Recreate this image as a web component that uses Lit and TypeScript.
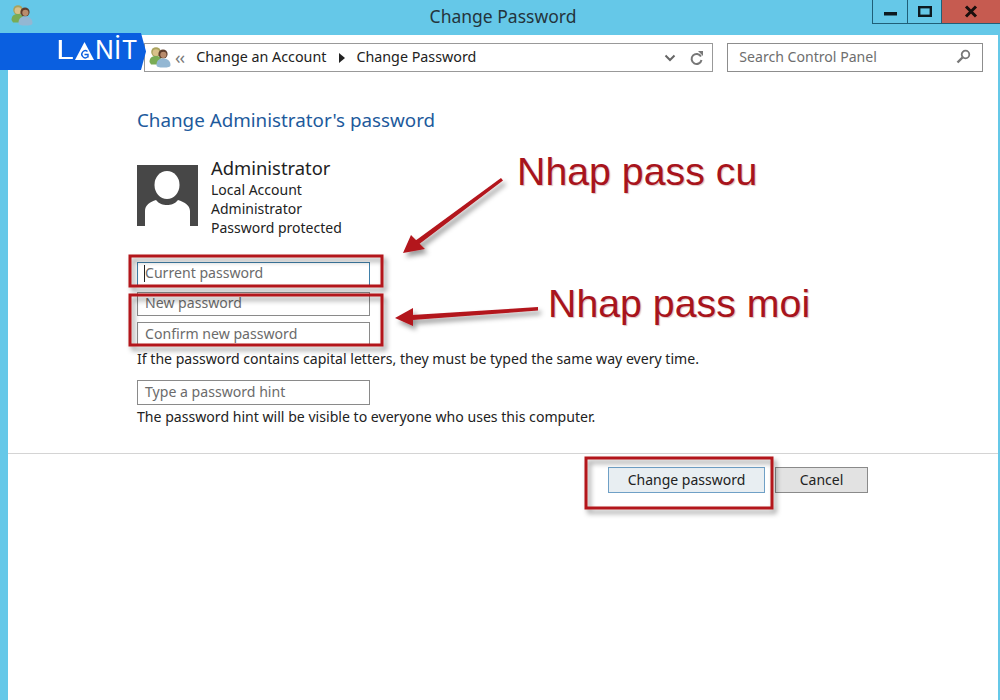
import { LitElement, html, css, svg } from "lit";
import { customElement } from "lit/decorators.js";

const users = (s: number) => html`<svg width=${s} height=${s} viewBox="0 0 22 22">
  <circle cx="7" cy="6" r="4.800" fill="#a9a25c"/>
  <circle cx="7" cy="6.600" r="3.400" fill="#d8c08a"/>
  <path d="M0.500 16c0-4.500 3-6 6.500-6s5.500 1.500 5.500 6l-1 2.500H2z" fill="#79ab55"/>
  <circle cx="14" cy="8" r="4.600" fill="#5e3d2b"/>
  <circle cx="14.400" cy="8.800" r="3.100" fill="#b98c6c"/>
  <path d="M7.500 19c0-5 3-6.500 6.500-6.500s7.500 1.500 7.500 6.500c0 2-2.500 2.500-7 2.500s-7-.5-7-2.500z" fill="#93b7d3"/>
</svg>`;

const arrowDefs = svg`<defs>
  <filter id="sh" x="-30%" y="-30%" width="170%" height="170%">
    <feDropShadow dx="3" dy="4" stdDeviation="2.500" flood-color="#000" flood-opacity=".4"/>
  </filter>
</defs>`;

@customElement("app-root")
export class AppRoot extends LitElement {
  static styles = css`
    :host { display: block; width: 1000px; height: 700px; position: relative; overflow: hidden;
      background: #65c8e8; font-family: "Noto Sans", "Open Sans", sans-serif; color: #1e1e1e; }
    .window { display: flex; flex-direction: column; height: 700px; }
    .titlebar { height: 35px; flex: none; display: flex; align-items: flex-start; position: relative; }
    .appicon { margin: 4px 0 0 11px; }
    .title { position: absolute; left: 0; right: 0; top: 5px; padding-left: 6px; text-align: center; font-size: 17.500px; line-height: 22px; color: #24343c; }
    .controls { position: relative; margin-left: auto; display: flex; height: 23px; border-left: 1px solid #1f5f78; border-bottom: 1px solid #1f5f78; }
    .ctl { display: flex; align-items: center; justify-content: center; }
    .ctl.min { width: 34px; border-right: 1px solid #1f5f78; }
    .ctl.max { width: 33px; border-right: 1px solid #1f5f78; }
    .ctl.close { width: 58px; background: #c65b50; }
    .pane { flex: 1; margin: 0 2px 0 8px; background: #fff; display: flex; flex-direction: column; }
    .nav { flex: none; display: flex; gap: 14px; padding: 8px 15px 0 136px; height: 29px; }
    .addr, .search { height: 29px; box-sizing: border-box; border: 1px solid #8d8d8d; display: flex; align-items: center; font-size: 14.300px; background: #fff; padding-bottom: 2px; }
    .addr { width: 570px; border-color: #999; padding-left: 4px; }
    .search { width: 256px; padding-left: 11px; padding-right: 11px; color: #6e6e6e; justify-content: space-between; font-size: 14.100px; }
    .chev { color: #777; margin: 0 12px 0 4px; font-size: 18px; line-height: 18px; letter-spacing: -1px; }
    .crumb { color: #222; }
    .sep { margin: 2px 11px 0 13px; width: 0; height: 0; border-left: 6px solid #222; border-top: 5px solid transparent; border-bottom: 5px solid transparent; }
    .addr .tools { margin-left: auto; display: flex; gap: 13px; align-items: center; padding-right: 8px; padding-top: 2px; }
    .content { flex: 1; display: flex; flex-direction: column; padding: 35px 0 0 129px; }
    h1 { margin: 0; font-weight: 400; font-size: 18.800px; line-height: 26px; color: #1d5a9c; }
    .user { display: flex; gap: 13px; margin-top: 24px; }
    .avatar { width: 61px; height: 61px; flex: none; display: block; margin-top: 8px; }
    .uname { font-size: 18.400px; line-height: 24px; color: #222; margin-top: -1px; }
    .uline { font-size: 14px; line-height: 19px; color: #222; }
    .field { width: 233px; height: 24px; box-sizing: border-box; border: 1px solid #8a8a8a; font-size: 14.100px; line-height: 20px; color: #6b6b6b; padding-left: 7px; }
    .fields { display: flex; flex-direction: column; gap: 6px; margin-top: 25px; }
    .field.focus { border-color: #3f7fa8; padding-left: 6px; padding-bottom: 2px; display: flex; align-items: center; }
    .field.confirm { line-height: 21px; }
    .caret { width: 1px; height: 17px; background: #222; }
    .note { font-size: 14.100px; line-height: 20px; color: #222; }
    .note.a { margin-top: 3px; }
    .field.hint { margin-top: 11px; height: 25px; line-height: 22px; }
    .note.b { margin-top: 2px; }
    .divider { height: 1px; background: #d4d4d4; margin: 26px 0 0 -129px; }
    .actions { display: flex; gap: 10px; margin: 13px 0 0 471px; }
    .btn { box-sizing: border-box; height: 26px; font-size: 14px; line-height: 23px; text-align: center; background: #e2e2e2; color: #222; border: 1px solid #8a8a8a; }
    .btn.primary { width: 157px; background: #e8eef2; border: 1.500px solid #6fa0c6; }
    .btn.cancel { width: 93px; }
    .lanit { position: absolute; left: 0; top: 33px; width: 146px; height: 37px; }
    .logo { position: absolute; left: 56px; top: 33px; height: 37px; display: flex; align-items: center; color: #fff; font-family: Inter, "Liberation Sans", sans-serif; font-weight: 400; font-size: 25px; line-height: 37px; }
    .logo .l { display: inline-block; width: 19px; transform: scaleX(1.300); transform-origin: left; margin-top: -2px; }
    .logo svg { display: block; margin: 0 1px 0 0; }
    .logo .rest { margin-top: -2px; letter-spacing: .5px; }
    .anno { position: absolute; left: 0; top: 0; width: 1000px; height: 700px; pointer-events: none; }
    .lbl { position: absolute; font-family: "Liberation Sans", Arial, sans-serif; color: #a8141c; font-size: 39.300px; line-height: 44px; white-space: nowrap; text-shadow: 1px 1px 1px rgba(120,0,0,.25); }
    .lbl.one { left: 517px; top: 149px; }
    .lbl.two { left: 548px; top: 281px; }
  `;

  render() {
    return html`
      <div class="window">
        <div class="titlebar">
          <span class="appicon">${users(22)}</span>
          <div class="title">Change Password</div>
          <div class="controls">
            <div class="ctl min"><svg width="14" height="14" viewBox="0 0 14 14"><rect x="1" y="7" width="13" height="3.500" fill="#0d1a20"/></svg></div>
            <div class="ctl max"><svg width="14" height="12" viewBox="0 0 14 12"><rect x="1.200" y="1.200" width="11.600" height="8.600" fill="none" stroke="#0d1a20" stroke-width="2.400"/></svg></div>
            <div class="ctl close"><svg width="14" height="13" viewBox="0 0 14 13"><path d="M2 1.500l10 10M12 1.500l-10 10" stroke="#1a0f0d" stroke-width="3"/></svg></div>
          </div>
        </div>
        <div class="pane">
          <div class="nav">
            <div class="addr">
              ${users(22)}
              <span class="chev">‹‹</span>
              <span class="crumb">Change an Account</span>
              <span class="sep"></span>
              <span class="crumb">Change Password</span>
              <span class="tools">
                <svg width="12" height="8" viewBox="0 0 12 8"><path d="M1.500 1.500L6 6l4.500-4.500" fill="none" stroke="#666" stroke-width="2"/></svg>
                <svg width="15" height="16" viewBox="0 0 15 16"><path d="M12 6.500A5 5 0 1 0 12.500 10" fill="none" stroke="#777" stroke-width="2"/><path d="M9 1l5 0 0 5z" fill="#777"/></svg>
              </span>
            </div>
            <div class="search">
              <span>Search Control Panel</span>
              <svg width="15" height="15" viewBox="0 0 15 15"><circle cx="9.500" cy="5.500" r="3.800" fill="none" stroke="#777" stroke-width="1.800"/><path d="M6.500 8.500L1.500 13.500" stroke="#777" stroke-width="2.400"/></svg>
            </div>
          </div>
          <div class="content">
            <h1>Change Administrator's password</h1>
            <div class="user">
              <svg class="avatar" viewBox="0 0 61 61">
                <rect width="61" height="61" fill="#474747"/>
                <ellipse cx="30" cy="20" rx="12.500" ry="14" fill="#fff"/>
                <path d="M8 61V46c0-6 5-9 11-11 3 4 7 5 11 5s8-1 11-5c6 2 12 5 12 11v15z" fill="#fff"/>
              </svg>
              <div>
                <div class="uname">Administrator</div>
                <div class="uline">Local Account</div>
                <div class="uline">Administrator</div>
                <div class="uline">Password protected</div>
              </div>
            </div>
            <div class="fields">
              <div class="field focus"><span class="caret"></span>Current password</div>
              <div class="field">New password</div>
              <div class="field confirm">Confirm new password</div>
            </div>
            <div class="note a">If the password contains capital letters, they must be typed the same way every time.</div>
            <div class="field hint">Type a password hint</div>
            <div class="note b">The password hint will be visible to everyone who uses this computer.</div>
            <div class="divider"></div>
            <div class="actions">
              <div class="btn primary">Change password</div>
              <div class="btn cancel">Cancel</div>
            </div>
          </div>
        </div>
      </div>

      <svg class="lanit" viewBox="0 0 146 37"><path d="M0 0H141L146 18.500 141 37H0z" fill="#0a5fe0"/></svg>
      <div class="logo">
        <span class="l">L</span>
        <svg width="19" height="19" viewBox="0 0 19 19"><path d="M9.500 0L19 18H0z" fill="#fff"/><path d="M12.500 9.500a3.500 3.500 0 1 0 0 5.500M9.500 12.500h3.500v3" fill="none" stroke="#0a5fe0" stroke-width="1.400"/></svg>
        <span class="rest">NİT</span>
      </div>

      <svg class="anno" viewBox="0 0 1000 700">
        ${arrowDefs}
        <g filter="url(#sh)" fill="none" stroke="#b3141d" stroke-width="3">
          <rect x="130" y="256" width="252" height="30"/>
          <rect x="130" y="295" width="252" height="50"/>
          <rect x="586" y="458" width="186" height="50"/>
          <path d="M403 253L411 235L425 249z M501 178L503 180.500L418 245L415 241z" fill="#b3141d" stroke="none"/>
          <path d="M395 318L413 308L413 326z M538 307L538 310.500L412 320L412 315z" fill="#b3141d" stroke="none"/>
        </g>
      </svg>
      <div class="lbl one">Nhap pass cu</div>
      <div class="lbl two">Nhap pass moi</div>
    `;
  }
}
